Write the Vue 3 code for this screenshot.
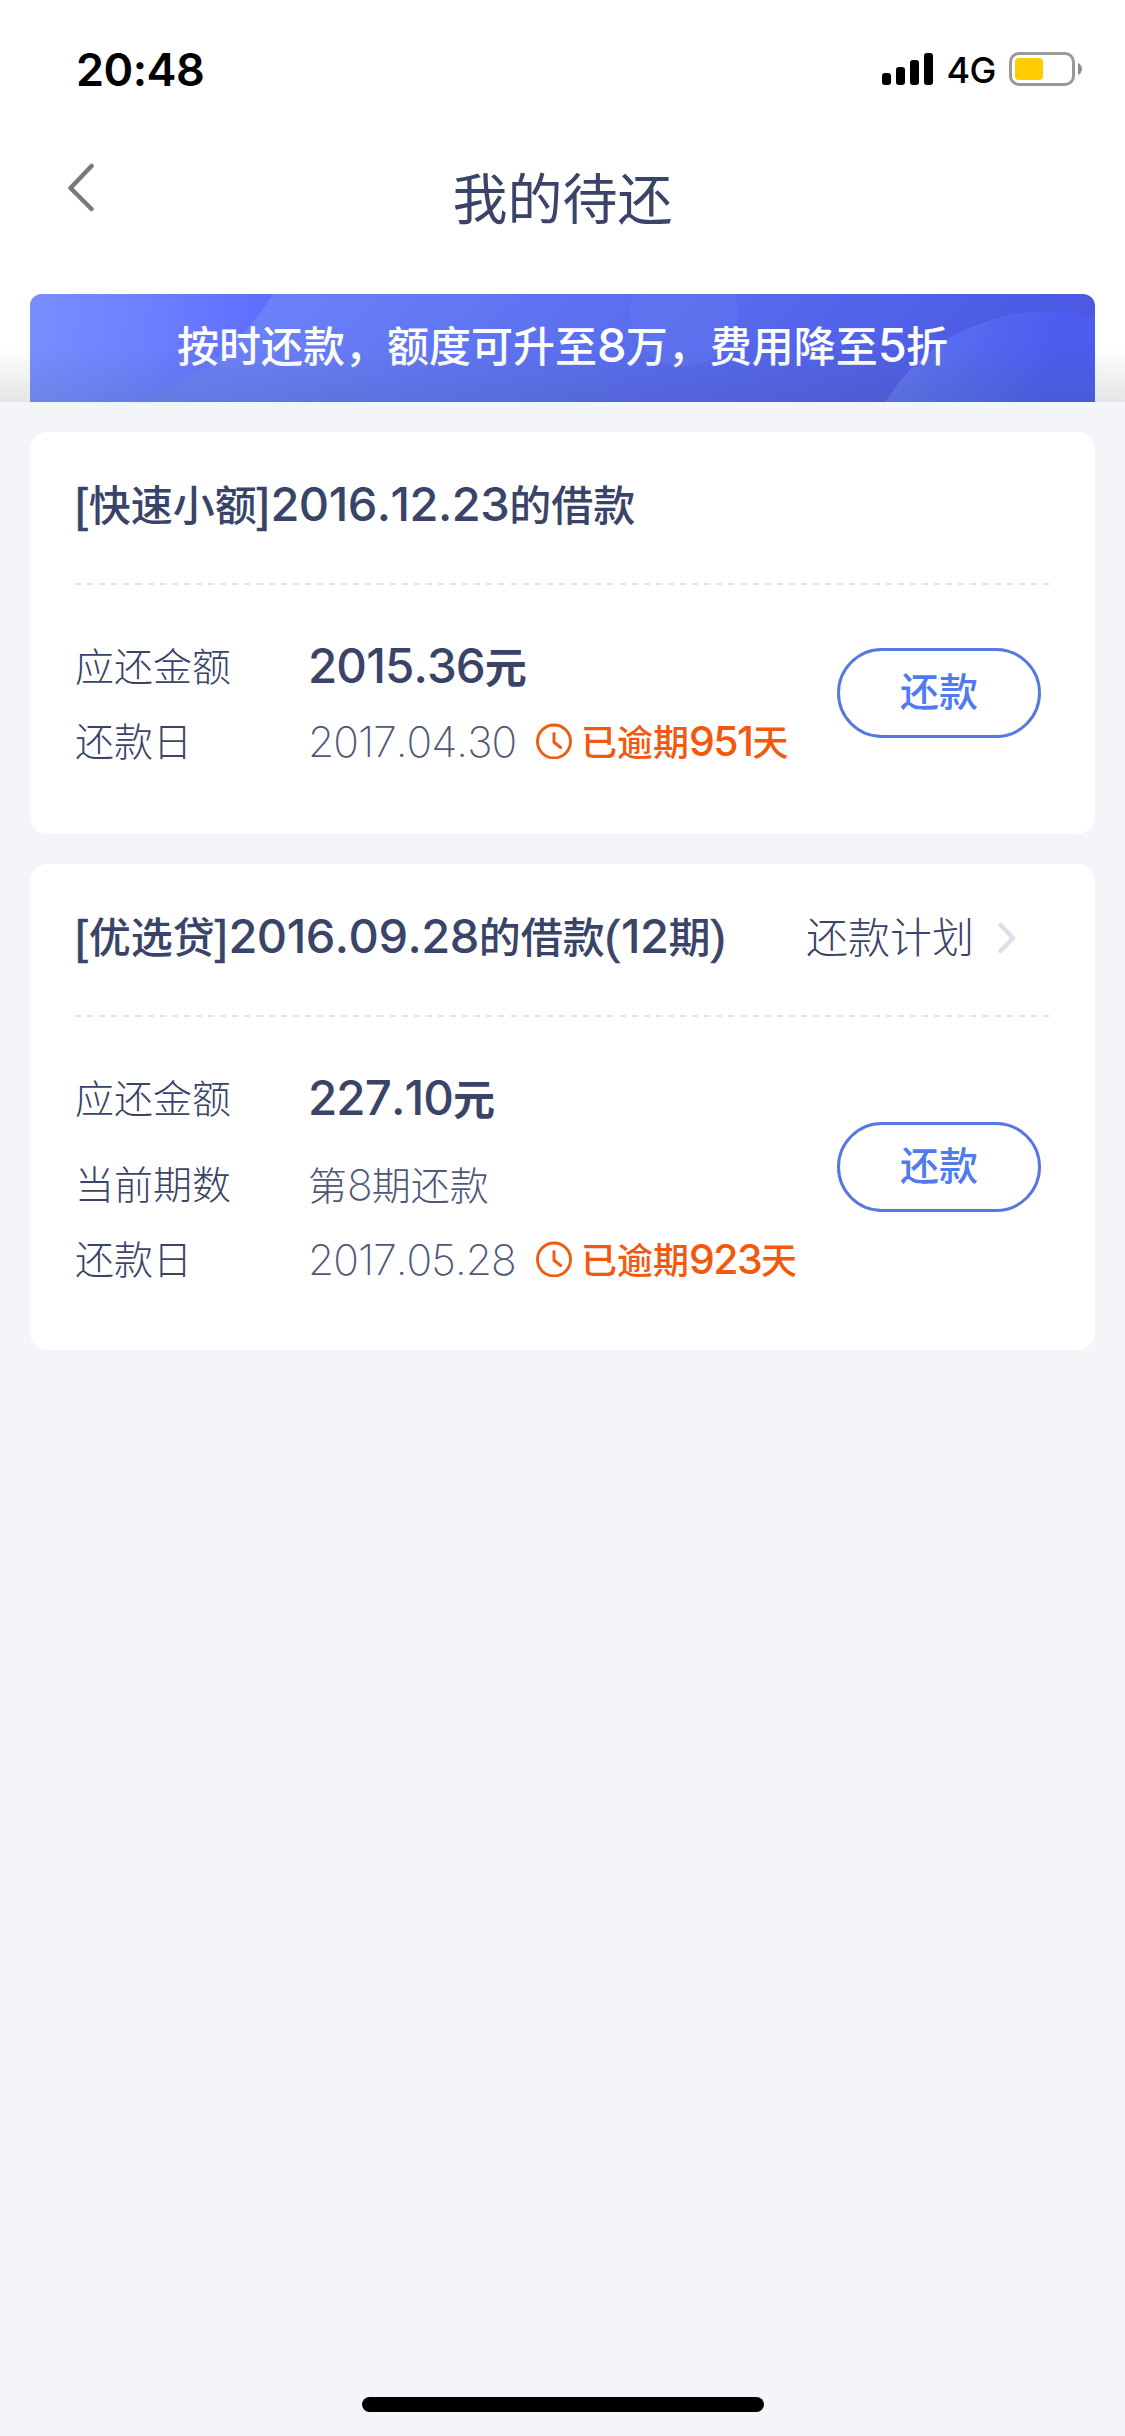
<script setup>
import { ref } from 'vue';

const pageTitle = ref('我的待还');
const notice = ref('按时还款，额度可升至8万，费用降至5折');

const loans = ref([
  {
    id: 1,
    title: '[快速小额]2016.12.23的借款',
    amount: '2015.36元',
    period: '',
    dueDate: '2017.04.30',
    overdue: '已逾期951天',
    hasPlan: false,
  },
  {
    id: 2,
    title: '[优选贷]2016.09.28的借款(12期)',
    amount: '227.10元',
    period: '第8期还款',
    dueDate: '2017.05.28',
    overdue: '已逾期923天',
    hasPlan: true,
  },
]);

// Signal bar heights, left to right
const bars = [12, 18, 25, 32];

// Split text into digit, bracket and chinese runs, each has its own type style
const runs = (text) =>
  text.match(/[\d.]+|[[\]()]|[^\d.[\]()]+/g).map((part) => ({
    part,
    latin: /^[\d.]/.test(part),
    bracket: /^[[\]()]/.test(part),
  }));
</script>

<template>
  <div class="page">
    <header class="top">
      <div class="status-bar">
        <span class="time">20:48</span>
        <div class="status-icons">
          <div class="signal">
            <i v-for="h in bars" :key="h" :style="{ height: h + 'px' }"></i>
          </div>
          <span class="network">4G</span>
          <svg class="battery" width="74" height="34" viewBox="0 0 74 34">
            <rect x="1.5" y="1.5" width="63" height="31" rx="8.5" fill="none" stroke="#999" stroke-width="3" />
            <rect x="6" y="6" width="28" height="22" rx="4" fill="#ffcc00" />
            <path d="M69 11C74.300 13 74.300 21 69 23Z" fill="#8c8c8c" />
          </svg>
        </div>
      </div>

      <nav class="nav-bar">
        <svg class="back" width="28" height="50" viewBox="0 0 28 50">
          <path d="M24.500 3L3.500 25L24.500 46" fill="none" stroke="#797979" stroke-width="4.500" stroke-linecap="round" stroke-linejoin="round" />
        </svg>
        <h1>{{ pageTitle }}</h1>
      </nav>

      <div class="notice">
        <svg class="notice-bg" width="1065" height="108" viewBox="0 0 1065 108">
          <defs>
            <linearGradient id="base" x1="0" x2="1" y1="0" y2="0.100">
              <stop offset="0" stop-color="#7089ff" />
              <stop offset="0.250" stop-color="#6a80f8" />
              <stop offset="0.550" stop-color="#5b6ff0" />
              <stop offset="1" stop-color="#4a58e3" />
            </linearGradient>
            <linearGradient id="left" gradientUnits="userSpaceOnUse" x1="0" y1="0" x2="240" y2="30">
              <stop offset="0" stop-color="#788eff" />
              <stop offset="0.500" stop-color="#6c80ff" />
              <stop offset="1" stop-color="#5d6dff" />
            </linearGradient>
            <linearGradient id="right" gradientUnits="userSpaceOnUse" x1="860" y1="60" x2="1010" y2="110">
              <stop offset="0" stop-color="#6074f1" />
              <stop offset="1" stop-color="#4b5cee" />
            </linearGradient>
          </defs>
          <rect width="1065" height="108" fill="url(#base)" />
          <circle cx="36" cy="-124" r="241" fill="url(#left)" />
          <circle cx="654" cy="18" r="54" fill="#7086f6" opacity="0.250" />
          <circle cx="1018" cy="208" r="191" fill="url(#right)" />
        </svg>
        <p>
          <span v-for="(r, i) in runs(notice)" :key="i" :class="{ latin: r.latin }">{{ r.part }}</span>
        </p>
      </div>
      <div class="top-shade"></div>
    </header>

    <main class="list">
      <section v-for="loan in loans" :key="loan.id" class="card" :class="{ tall: loan.hasPlan }">
        <div class="card-head">
          <h2>
            <span v-for="(r, i) in runs(loan.title)" :key="i" :class="{ latin: r.latin, bracket: r.bracket }">{{ r.part }}</span>
          </h2>
          <a v-if="loan.hasPlan" class="plan">
            还款计划
            <svg width="20" height="36" viewBox="0 0 20 36">
              <path d="M2.500 8L15 21L2.500 34" fill="none" stroke="#dbe0ea" stroke-width="4.500" stroke-linecap="round" stroke-linejoin="round" />
            </svg>
          </a>
        </div>

        <div class="divider"></div>

        <div class="card-body">
          <div class="rows">
            <div class="row">
              <span class="label">应还金额</span>
              <span class="amount">
                <span v-for="(r, i) in runs(loan.amount)" :key="i" :class="{ latin: r.latin }">{{ r.part }}</span>
              </span>
            </div>
            <div v-if="loan.period" class="row period">
              <span class="label">当前期数</span>
              <span class="value">
                <span v-for="(r, i) in runs(loan.period)" :key="i" :class="{ latin: r.latin }">{{ r.part }}</span>
              </span>
            </div>
            <div class="row due">
              <span class="label">还款日</span>
              <span class="value date"><span class="latin">{{ loan.dueDate }}</span></span>
              <svg class="clock" width="36" height="36" viewBox="0 0 36 36">
                <circle cx="18" cy="18.500" r="16.500" fill="none" stroke="#ef5c10" stroke-width="2.900" />
                <path d="M18 10.500V19.300L24.600 24.500" fill="none" stroke="#ef5c10" stroke-width="3" stroke-linecap="round" stroke-linejoin="round" />
              </svg>
              <span class="overdue">
                <span v-for="(r, i) in runs(loan.overdue)" :key="i" :class="{ latin: r.latin }">{{ r.part }}</span>
              </span>
            </div>
          </div>
          <button type="button" class="repay">还款</button>
        </div>
      </section>
    </main>

    <div class="home-indicator"></div>
  </div>
</template>

<style>
body {
  background: #f3f5f9;
}
</style>

<style scoped>
.page {
  display: flex;
  flex-direction: column;
  box-sizing: border-box;
  width: 1125px;
  height: 2436px;
  padding-bottom: 24px;
  background: #f3f5f9;
  color: #3a4468;
  font-family: 'Noto Sans CJK SC', sans-serif;
}

h1,
h2,
p {
  margin: 0;
  font-weight: inherit;
}

.latin {
  font-family: Inter, 'Liberation Sans', sans-serif;
  font-kerning: none;
}

.bracket {
  font-family: 'Liberation Sans', sans-serif;
  font-size: 46px;
  line-height: 1;
  letter-spacing: 0.900px;
  -webkit-text-stroke: 0.700px currentColor;
}

.top {
  position: relative;
  box-sizing: border-box;
  height: 402px;
  background: #fff;
}

/* Status bar */
.status-bar {
  display: flex;
  justify-content: space-between;
  align-items: center;
  box-sizing: border-box;
  height: 138px;
  padding: 0 42px 0 76px;
  color: #000;
  font-family: Inter, sans-serif;
}

.time {
  font-size: 45px;
  font-weight: 600;
  letter-spacing: -0.500px;
}

.status-icons {
  display: flex;
  align-items: center;
}

.signal {
  display: flex;
  align-items: flex-end;
  gap: 5px;
}

.signal i {
  width: 9px;
  border-radius: 3px;
  background: #000;
}

.network {
  margin: 0 13px 0 13px;
  padding-top: 2px;
  font-size: 36px;
  font-weight: 450;
  letter-spacing: -0.500px;
}

/* Nav bar */
.nav-bar {
  display: grid;
  grid-template-columns: 200px 1fr 200px;
  align-items: center;
  height: 156px;
}

.back {
  margin: 0 0 56px 67px;
}

h1 {
  padding-bottom: 43px;
  text-align: center;
  font-size: 55px;
  line-height: 80px;
  font-weight: 400;
}

/* Notice banner */
.notice {
  position: relative;
  height: 108px;
  margin: 0 30px;
  border-radius: 12px 12px 0 0;
  overflow: hidden;
  color: #fff;
}

.notice-bg {
  position: absolute;
  top: 0;
  left: 0;
}

.notice p {
  position: relative;
  text-align: center;
  font-size: 42px;
  line-height: 100px;
  font-weight: 500;
}

.notice .latin {
  font-size: 47px;
  line-height: 1;
  font-weight: 450;
  letter-spacing: -0.800px;
}

.top-shade {
  position: absolute;
  left: 0;
  right: 0;
  bottom: 0;
  height: 56px;
  background: linear-gradient(rgba(70, 85, 90, 0), rgba(70, 85, 90, 0.15));
}

/* Loan cards */
.list {
  display: flex;
  flex: 1;
  flex-direction: column;
  gap: 30px;
  padding: 30px 30px 0;
}

.card {
  display: flex;
  flex-direction: column;
  height: 402px;
  border-radius: 18px;
  background: #fff;
}

.card.tall {
  height: 486px;
}

.card-head {
  display: flex;
  justify-content: space-between;
  align-items: center;
  box-sizing: border-box;
  height: 151px;
  padding: 0 77px 9px 45px;
}

h2 {
  font-size: 42px;
  line-height: 60px;
  font-weight: 500;
  white-space: nowrap;
}

h2 .latin {
  font-size: 47px;
  line-height: 1;
  letter-spacing: -0.500px;
}

.plan {
  display: flex;
  align-items: center;
  gap: 24px;
  font-size: 42px;
  line-height: 60px;
  font-weight: 300;
}

.divider {
  height: 2px;
  margin: 0 45px;
  background: repeating-linear-gradient(90deg, #e2e4ec 0 6px, transparent 6px 12.100px);
}

.card-body {
  display: flex;
  flex: 1;
  justify-content: space-between;
  align-items: center;
  padding: 0 54px 0 45px;
}

.rows {
  align-self: flex-start;
  padding-top: 51px;
}

.row {
  display: flex;
  align-items: center;
  height: 60px;
  line-height: 60px;
  white-space: nowrap;
}

.row .latin {
  line-height: 1;
}

.period {
  margin-top: 26px;
}

.due {
  margin-top: 15px;
}

.label {
  width: 233px;
  padding-bottom: 5px;
  font-size: 39px;
  font-weight: 300;
}

.amount {
  padding-bottom: 2px;
  font-size: 42px;
  font-weight: 600;
}

.amount .latin {
  font-size: 47.500px;
  font-weight: 550;
  letter-spacing: -0.900px;
}

.value {
  padding-bottom: 3px;
  font-size: 39px;
  font-weight: 300;
  color: #4f5878;
}

.value .latin {
  font-size: 42.500px;
  font-weight: 250;
  letter-spacing: -0.950px;
}

.date {
  width: 228px;
}

.clock {
  margin-right: 9px;
}

.overdue {
  padding-bottom: 3px;
  color: #f2590f;
  font-size: 36px;
  font-weight: 500;
}

.overdue .latin {
  font-size: 41px;
  letter-spacing: -1.600px;
}

.repay {
  box-sizing: border-box;
  width: 204px;
  height: 90px;
  margin: 0 0 33px;
  padding: 0 0 8px;
  border: 3px solid #5678e0;
  border-radius: 45px;
  background: #fff;
  color: #4f7af0;
  font-family: inherit;
  font-size: 39px;
  font-weight: 500;
}

.home-indicator {
  align-self: center;
  width: 402px;
  height: 15px;
  border-radius: 8px;
  background: #000;
}
</style>
